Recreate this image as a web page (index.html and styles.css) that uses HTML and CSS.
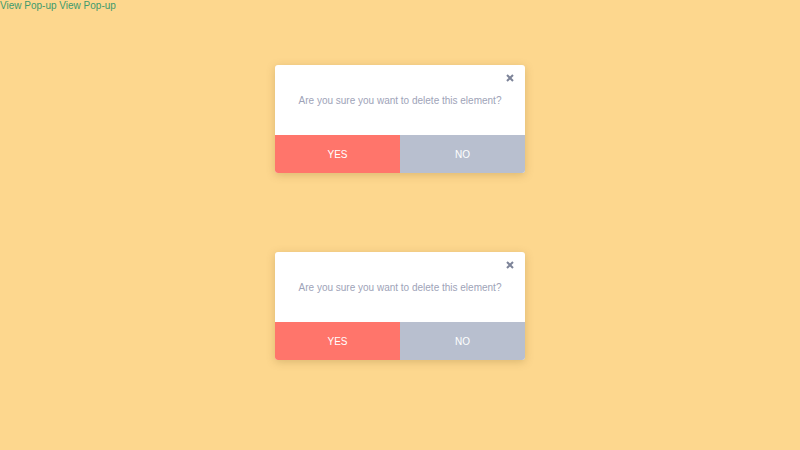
FILE: index.html
```html
<!DOCTYPE html>
<html>
<head>
<meta charset="utf-8">
<link rel="stylesheet" href="styles.css">
</head>
<body>
<div class="links"><a href="#" class="link">View Pop-up</a> <a href="#" class="link">View Pop-up</a></div>
<div class="stage">
  <div class="popup">
    <div class="popup-body">
      <svg class="close" width="8" height="8" viewBox="0 0 8 8"><path d="M1 1L7 7M7 1L1 7" stroke="#7d8499" stroke-width="2" stroke-linecap="butt"/></svg>
      <p class="msg">Are you sure you want to delete this element?</p>
    </div>
    <div class="actions">
      <button class="btn yes">YES</button>
      <button class="btn no">NO</button>
    </div>
  </div>
  <div class="popup">
    <div class="popup-body">
      <svg class="close" width="8" height="8" viewBox="0 0 8 8"><path d="M1 1L7 7M7 1L1 7" stroke="#7d8499" stroke-width="2" stroke-linecap="butt"/></svg>
      <p class="msg">Are you sure you want to delete this element?</p>
    </div>
    <div class="actions">
      <button class="btn yes">YES</button>
      <button class="btn no">NO</button>
    </div>
  </div>
</div>
</body>
</html>
```
FILE: styles.css
```css
html, body {
  margin: 0;
  padding: 0;
  height: 100%;
}
body {
  background: #fdd78e;
  font-family: "Liberation Sans", Arial, sans-serif;
}
.links {
  font-size: 10px;
  line-height: 11px;
  height: 12px;
}
.link {
  color: #3d9a6c;
  text-decoration: none;
}
.stage {
  display: flex;
  flex-direction: column;
  align-items: center;
  padding-top: 53px;
  gap: 79px;
}
.popup {
  width: 250px;
  background: #fff;
  border-radius: 3px;
  overflow: hidden;
  box-shadow: 0 2px 8px rgba(120, 90, 30, 0.25);
}
.popup-body {
  position: relative;
  height: 70px;
  display: flex;
  align-items: center;
  justify-content: center;
}
.close {
  position: absolute;
  top: 9px;
  right: 11px;
}
.msg {
  margin: 0;
  font-size: 10px;
  color: #9ea3b8;
}
.actions {
  display: flex;
  height: 38px;
}
.btn {
  flex: 1;
  border: 0;
  margin: 0;
  padding: 0;
  font-family: "Liberation Sans", Arial, sans-serif;
  font-size: 10px;
  color: #fff;
}
.yes {
  background: #ff756b;
}
.no {
  background: #b8bfcf;
}
```
